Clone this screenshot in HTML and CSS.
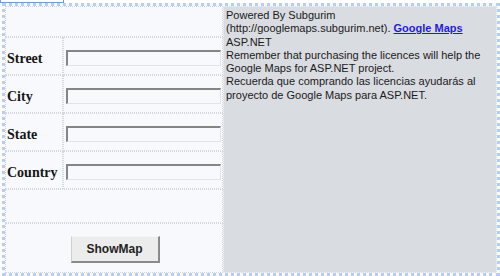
FILE: index.html
```html
<!DOCTYPE html>
<html>
<head>
<meta charset="utf-8">
<link rel="stylesheet" href="styles.css">
</head>
<body>
<div class="tab"></div>
<div class="frame">
  <div class="form">
    <div class="cell span"></div>
    <div class="cell label">Street</div>
    <div class="cell field"><input class="box" type="text"></div>
    <div class="cell label">City</div>
    <div class="cell field"><input class="box" type="text"></div>
    <div class="cell label">State</div>
    <div class="cell field"><input class="box" type="text"></div>
    <div class="cell label">Country</div>
    <div class="cell field"><input class="box" type="text"></div>
    <div class="cell span"></div>
    <div class="cell span actions"><button class="btn" type="button">ShowMap</button></div>
  </div>
  <div class="info">Powered By Subgurim<br>(http://googlemaps.subgurim.net). <a class="link" href="#">Google Maps</a><br>ASP.NET<br>Remember that purchasing the licences will help the<br>Google Maps for ASP.NET project.<br>Recuerda que comprando las licencias ayudarás al<br>proyecto de Google Maps para ASP.NET.</div>
</div>
</body>
</html>
```
FILE: styles.css
```css
html, body {
  margin: 0;
  padding: 0;
  background: #ffffff;
}
body {
  width: 500px;
  height: 276px;
  overflow: hidden;
}
.tab {
  width: 62px;
  height: 2px;
  border: 1px solid #7396d6;
  border-top: 0;
  background: #ffffff;
}
.frame {
  margin-left: 2px;
  width: 492px;
  height: 267px;
  border: 3px dotted #b9cdf0;
  background: #f7f9fd;
  display: grid;
  grid-template-columns: 218px 274px;
}
.form {
  display: grid;
  grid-template-columns: 58px 160px;
  grid-template-rows: 31px 38px 38px 38px 38px 34px 50px;
}
.cell {
  box-sizing: border-box;
  border: 1px dotted #d3d7de;
}
.span {
  grid-column: 1 / 3;
}
.label {
  display: flex;
  align-items: center;
  padding: 5px 0 0 1px;
  font: bold 14px "Liberation Serif", serif;
  color: #161616;
}
.field {
  display: flex;
  align-items: center;
  padding: 3px 0 0 2px;
}
.box {
  box-sizing: border-box;
  width: 155px;
  height: 16px;
  margin: 0;
  padding: 0;
  background: #f7f9fd;
  border-top: 2px solid #858585;
  border-left: 2px solid #858585;
  border-right: 1px solid #e2e4e8;
  border-bottom: 1px solid #e2e4e8;
}
.actions {
  display: flex;
  align-items: center;
  justify-content: center;
  padding: 3px 0 0 2px;
}
.btn {
  box-sizing: border-box;
  width: 89px;
  height: 27px;
  margin: 0;
  padding: 0;
  background: #ececec;
  border-top: 1px solid #f6f6f6;
  border-left: 1px solid #d0d0d0;
  border-right: 2px solid #8a8a8a;
  border-bottom: 2px solid #8a8a8a;
  font: bold 12px "Liberation Sans", Arial, sans-serif;
  color: #222222;
}
.info {
  box-sizing: border-box;
  border: 1px dotted #eef1f6;
  background: #d9dce1;
  padding: 2px 0 0 2px;
  font: 11px "Liberation Sans", Arial, sans-serif;
  line-height: 13.3px;
  color: #1a1a1a;
  white-space: nowrap;
}
.link {
  color: #1f1fd0;
  font-weight: bold;
  text-decoration: underline;
}
```
